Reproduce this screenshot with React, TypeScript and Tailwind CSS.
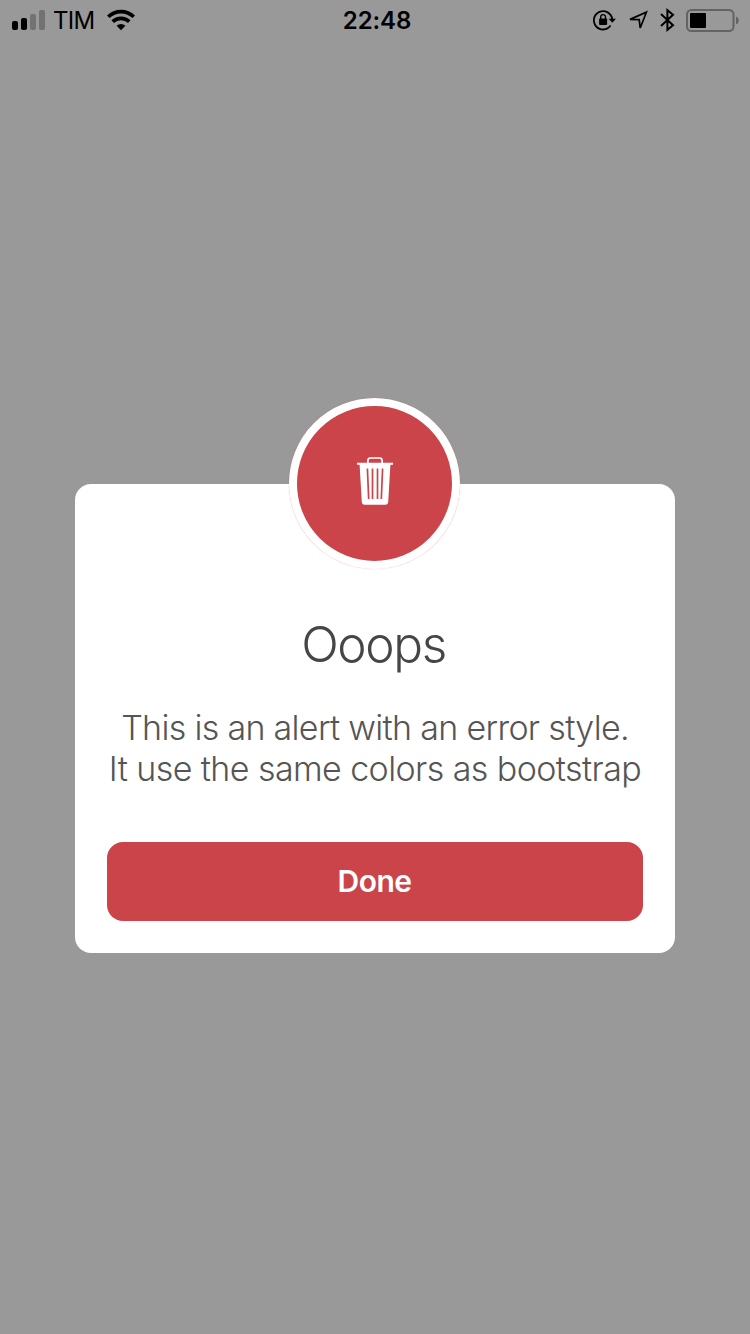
function SignalIcon() {
  return (
    <svg className="h-10 w-[34px] shrink-0" viewBox="0 0 34 40">
      <rect x="0" y="21" width="6" height="9" rx="2" fill="#000" />
      <rect x="9" y="18" width="6" height="12" rx="2" fill="#000" />
      <rect x="18" y="14" width="6" height="16" rx="2" fill="#727272" />
      <rect x="27" y="10" width="6" height="20" rx="2" fill="#727272" />
    </svg>
  );
}

function WifiIcon() {
  return (
    <svg className="h-10 w-7 shrink-0" viewBox="0 0 28 40" fill="none" stroke="#000" strokeWidth="3.7">
      <path d="M1.2 16.8a18.3 18.3 0 0 1 25.6 0" />
      <path d="M5.7 21.7a12 12 0 0 1 16.6 0" />
      <path d="M14 30.3l-4.4-4.5a6.2 6.2 0 0 1 8.8 0z" fill="#000" stroke="none" />
    </svg>
  );
}

function RotationLockIcon() {
  return (
    <svg className="h-10 w-6 shrink-0" viewBox="0 0 24 40" fill="none" stroke="#000">
      <path d="M18.6 25.6A9.2 9.2 0 1 1 20.2 19.2" strokeWidth="1.8" />
      <path d="M16.6 18.8h7.4l-3.7 4z" fill="#000" stroke="none" />
      <rect x="7.1" y="18.4" width="8" height="6.6" rx=".8" fill="#000" stroke="none" />
      <path d="M8.7 19v-2a2.4 2.4 0 0 1 4.8 0v2" strokeWidth="1.4" />
    </svg>
  );
}

function LocationIcon() {
  return (
    <svg className="h-10 w-5 shrink-0" viewBox="0 0 20 40" fill="none" stroke="#000" strokeWidth="1.7">
      <path d="M2 19.4L18.4 12.2 12.2 28l-1-8.4z" />
    </svg>
  );
}

function BluetoothIcon() {
  return (
    <svg className="h-10 w-4 shrink-0" viewBox="0 0 16 40" fill="none" stroke="#000" strokeWidth="2">
      <path d="M1 14l12 11.2-5.6 4.6V10.2l5.6 4.6L1 26" />
    </svg>
  );
}

function BatteryIcon() {
  return (
    <svg className="h-10 w-[54px] shrink-0" viewBox="0 0 54 40">
      <rect x="1" y="10" width="46.5" height="21" rx="4.5" fill="none" stroke="#636363" strokeWidth="2" />
      <rect x="4" y="13" width="16" height="15" rx="1" fill="#000" />
      <path d="M50 16.5c1.7.8 2.8 2.1 2.8 4s-1.1 3.2-2.8 4z" fill="#636363" />
    </svg>
  );
}

function TrashIcon() {
  return (
    <svg className="h-[50px] w-[38px]" viewBox="0 0 38 50">
      <path d="M11.9 8V5.6a2.6 2.6 0 0 1 2.6-2.6h9a2.6 2.6 0 0 1 2.6 2.6V8" fill="none" stroke="#fff" strokeWidth="1.7" />
      <path d="M1 7.8h36v2h-2.6l-2.2 37a3 3 0 0 1-3 2.9H8.8a3 3 0 0 1-3-2.9L3.6 9.8H1z" fill="#fff" />
      <g stroke="#cb444a" strokeWidth="1.7">
        <path d="M11.4 13.5l1.3 30.5" />
        <path d="M16.5 13.5v30.5" />
        <path d="M21.5 13.5v30.5" />
        <path d="M26.6 13.5l-1.3 30.5" />
      </g>
    </svg>
  );
}

function StatusBar() {
  return (
    <header className="grid h-10 grid-cols-[1fr_auto_1fr] items-center text-black">
      <div className="flex items-center pl-3">
        <SignalIcon />
        <span className="ml-[7px] h-10 w-[54px] text-[24px] leading-[42px] font-normal tracking-[-0.7px]">TIM</span>
        <WifiIcon />
      </div>
      <time className="h-10 w-[74px] pl-1 text-center text-[24px] leading-[42px] font-semibold tracking-[-0.1px] whitespace-nowrap">22:48</time>
      <div className="flex items-center justify-end pr-[10px]">
        <RotationLockIcon />
        <div className="ml-3 flex"><LocationIcon /></div>
        <div className="ml-3 flex"><BluetoothIcon /></div>
        <div className="ml-2.5 flex"><BatteryIcon /></div>
      </div>
    </header>
  );
}

export default function App() {
  return (
    <div className="flex h-[1334px] w-[750px] flex-col overflow-hidden bg-[#999999] font-['Inter','Liberation_Sans',sans-serif]">
      <StatusBar />
      <main className="mt-[444px] flex flex-col items-center">
        <section className="relative flex h-[469px] w-[600px] flex-col items-center rounded-2xl bg-white px-8 pt-[130px] pb-8">
          <div className="absolute -top-[86px] left-[214px] flex size-[171px] items-center justify-center rounded-full border-8 border-white bg-[#cb444a] pb-2 shadow-[0_0_1px_#cb444a99]">
            <TrashIcon />
          </div>
          <h1 className="pr-[3px] text-[49.5px] leading-[60px] font-[350] tracking-[-1.4px] text-[#464646]">Ooops</h1>
          <p className="mt-[33px] text-center text-[34px] leading-[41px] font-[350] whitespace-nowrap text-[#555555]">
            <span className="block tracking-[-0.68px]">This is an alert with an error style.</span>
            <span className="block tracking-[-0.58px]">It use the same colors as bootstrap</span>
          </p>
          <button className="mt-auto h-[79px] w-full rounded-2xl bg-[#cb444a] pr-px pb-0.5 text-[30px] leading-[36px] font-semibold tracking-[-0.5px] text-white">Done</button>
        </section>
      </main>
    </div>
  );
}
